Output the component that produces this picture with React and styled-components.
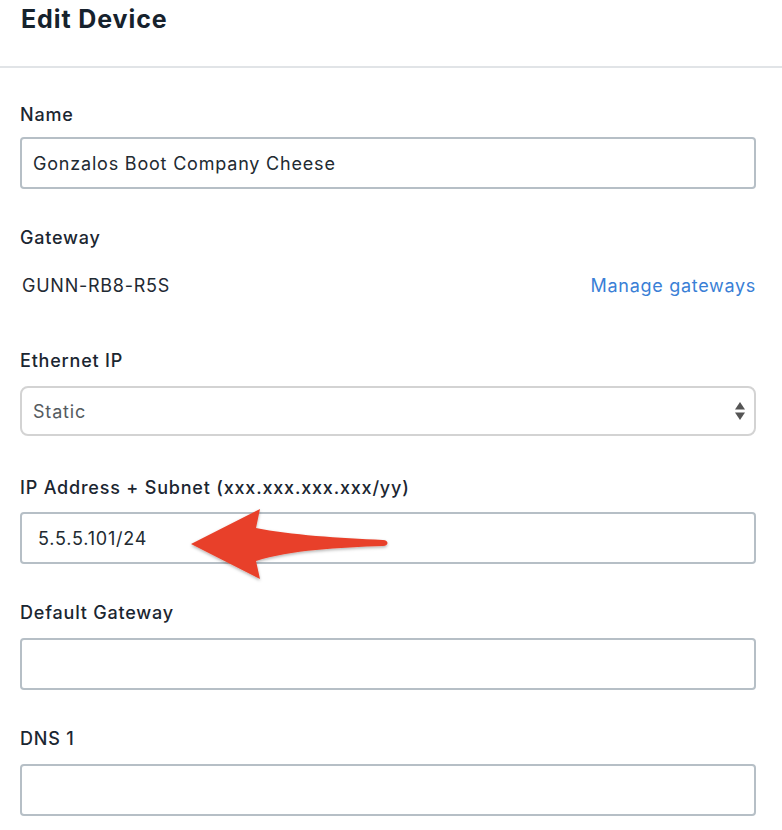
import React from "react";
import styled, { createGlobalStyle } from "styled-components";

const GlobalStyle = createGlobalStyle`
  html, body { margin: 0; padding: 0; background: #ffffff; }
  body { font-family: Inter, "Liberation Sans", sans-serif; -webkit-font-smoothing: antialiased; }
  * { box-sizing: border-box; }
`;

const Page = styled.div`
  width: 782px;
  min-height: 830px;
  background: #fff;
`;

const Header = styled.header`
  height: 68px;
  border-bottom: 2px solid #e1e4e7;
  padding: 3px 20px 0 21px;
`;

const Title = styled.h1`
  margin: 0;
  font-size: 25px;
  line-height: 32px;
  font-weight: 700;
  color: #16222d;
  letter-spacing: 0.9px;
`;

const Form = styled.form`
  padding: 35px 26px 0 20px;
  display: flex;
  flex-direction: column;
`;

const Field = styled.div`
  position: relative;
  display: flex;
  flex-direction: column;
  margin-bottom: ${(p) => p.$after ?? 37}px;
`;

const Label = styled.label`
  font-size: 18px;
  line-height: 24px;
  font-weight: 500;
  color: #1b2631;
  letter-spacing: 0.8px;
  margin-bottom: ${(p) => p.$gap ?? 13}px;
`;

const TextInput = styled.input`
  height: 52px;
  width: 100%;
  border: 2px solid #b6bfc6;
  border-radius: 4px;
  padding: 0 ${(p) => p.$pad ?? 11}px;
  font-family: Inter, "Liberation Sans", sans-serif;
  font-size: 18px;
  letter-spacing: 0.8px;
  color: #222a31;
  background: #fff;
  outline: none;
`;

const GatewayRow = styled.div`
  display: flex;
  justify-content: space-between;
  align-items: center;
  height: 24px;
  padding-left: 2px;
`;

const GatewayName = styled.span`
  font-size: 18px;
  letter-spacing: 0.75px;
  color: #1f2a33;
`;

const ManageLink = styled.a`
  font-size: 18px;
  letter-spacing: 0.7px;
  color: #3a7fd6;
  text-decoration: none;
  cursor: pointer;
`;

const SelectBox = styled.div`
  height: 50px;
  border: 2px solid #d3d3d3;
  border-radius: 8px;
  display: flex;
  align-items: center;
  justify-content: space-between;
  padding: 0 8px 0 11px;
  font-size: 18px;
  letter-spacing: 0.8px;
  color: #555b60;
`;

const ArrowOverlay = styled.svg`
  position: absolute;
  left: 160px;
  top: 24px;
  width: 240px;
  height: 90px;
  overflow: visible;
  pointer-events: none;
`;

function Stepper() {
  return (
    <svg width="12" height="20" viewBox="0 0 12 20">
      <path d="M6 1 L11 8.5 L1 8.5 Z" fill="#555" />
      <path d="M6 19 L11 11.5 L1 11.5 Z" fill="#555" />
    </svg>
  );
}

export default function App() {
  return (
    <Page>
      <GlobalStyle />
      <Header>
        <Title>Edit Device</Title>
      </Header>
      <Form onSubmit={(e) => e.preventDefault()}>
        <Field $after={37}>
          <Label $gap={10}>Name</Label>
          <TextInput defaultValue="Gonzalos Boot Company Cheese" />
        </Field>
        <Field $after={52}>
          <Label $gap={23}>Gateway</Label>
          <GatewayRow>
            <GatewayName>GUNN-RB8-R5S</GatewayName>
            <ManageLink>Manage gateways</ManageLink>
          </GatewayRow>
        </Field>
        <Field $after={40}>
          <Label $gap={13}>Ethernet IP</Label>
          <SelectBox>
            <span>Static</span>
            <Stepper />
          </SelectBox>
        </Field>
        <Field>
          <Label $gap={12}>IP Address + Subnet (xxx.xxx.xxx.xxx/yy)</Label>
          <TextInput $pad={16} defaultValue="5.5.5.101/24" />
          <ArrowOverlay viewBox="180 500 240 90">
            <defs>
              <filter id="sh" x="-20%" y="-30%" width="140%" height="160%">
                <feDropShadow dx="0" dy="1.5" stdDeviation="1.5" floodColor="#000" floodOpacity="0.3" />
              </filter>
            </defs>
            <path
              d="M191 544 L260 509 L256 528 C 290 535, 340 538, 383 540 C 389 540.3, 389 545.7, 383 546 C 340 547.5, 290 550, 256 561 L260 579 Z"
              fill="#e8412a"
              filter="url(#sh)"
            />
          </ArrowOverlay>
        </Field>
        <Field>
          <Label>Default Gateway</Label>
          <TextInput />
        </Field>
        <Field>
          <Label>DNS 1</Label>
          <TextInput />
        </Field>
      </Form>
    </Page>
  );
}
